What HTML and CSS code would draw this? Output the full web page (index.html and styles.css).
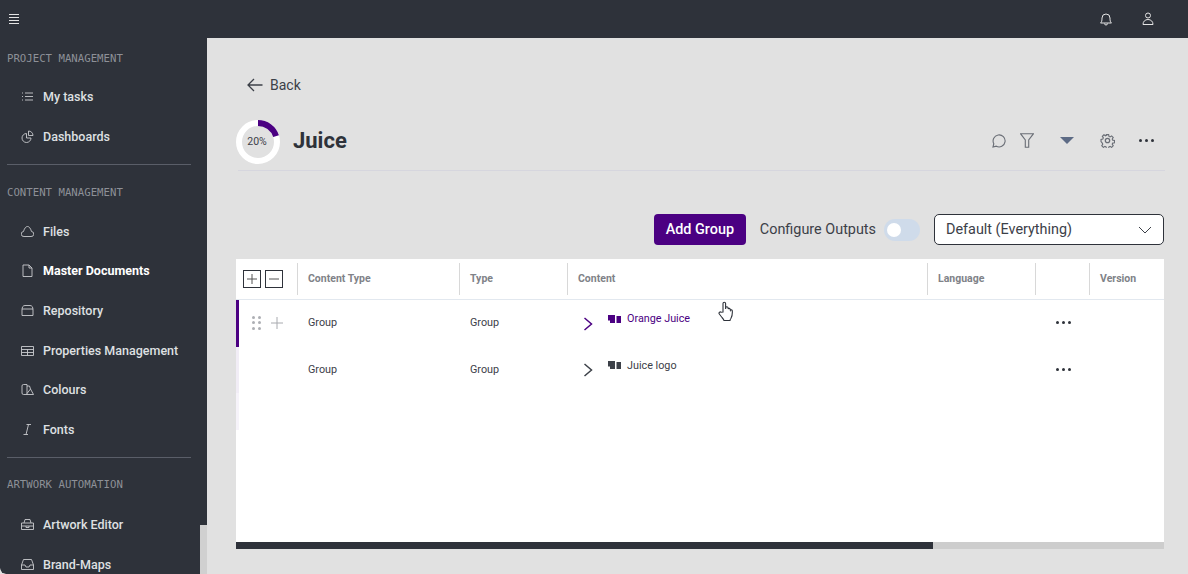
FILE: index.html
```html
<!DOCTYPE html>
<html lang="en">
<head>
    <meta charset="UTF-8">
    <title>Juice</title>
    <link rel="stylesheet" href="styles.css">
</head>
<body>
    <header class="topbar">
        <svg class="menu-icon" width="10" height="10" viewBox="0 0 10 10"><path d="M0 .5h10M0 3.5h10M0 6.5h10M0 9.5h10"/></svg>
        <svg class="top-icon bell" width="14" height="14" viewBox="0 0 14 14"><path d="M1.500 11c1.200-1 1.500-2 1.500-5a4 4 0 0 1 8 0c0 3 .3 4 1.500 5zM5.500 11.500a1.500 1.500 0 0 0 3 0"/></svg>
        <svg class="top-icon" width="14" height="14" viewBox="0 0 14 14"><circle cx="7" cy="3.500" r="2.500"/><path d="M2 12.500c0-3 2-5 5-5s5 2 5 5z"/></svg>
    </header>

    <div class="layout">
        <aside class="sidebar">
            <nav class="nav">
                <div class="nav-title first">PROJECT MANAGEMENT</div>
                <a class="nav-item"><svg width="13" height="13" viewBox="0 0 13 13"><path d="M4 3h8M4 6.500h8M4 10h8M1 3h1M1 6.500h1M1 10h1"/></svg>My tasks</a>
                <a class="nav-item"><svg width="13" height="13" viewBox="0 0 13 13"><path d="M5.500 3.500a4.500 4.500 0 1 0 4.500 4.500H5.500z"/><path d="M7.500 1a4.500 4.500 0 0 1 4.500 4.500H7.500z"/></svg>Dashboards</a>
                <div class="nav-line"></div>
                <div class="nav-title">CONTENT MANAGEMENT</div>
                <a class="nav-item"><svg width="13" height="13" viewBox="0 0 13 13"><path d="M3 11.500a2.500 2.500 0 0 1-.5-5C3.500 3 5 1.500 6.500 1.500s3 1.500 4 5a2.500 2.500 0 0 1-.5 5z"/></svg>Files</a>
                <a class="nav-item active"><svg width="13" height="13" viewBox="0 0 13 13"><path d="M2 1h6l3 3v8.500H2z"/><path d="M8 1v3h3"/></svg>Master Documents</a>
                <a class="nav-item"><svg width="13" height="13" viewBox="0 0 13 13"><path d="M1 6V11.500h11V6c0-3-1-4.500-3-4.500H4C2 1.500 1 3 1 6zM1 5h11"/></svg>Repository</a>
                <a class="nav-item"><svg width="13" height="13" viewBox="0 0 13 13"><path d="M.5 2.500h12v9H.5zM.5 5.500h12M.5 8.500h12M6.500 5.500v6"/></svg>Properties Management</a>
                <a class="nav-item"><svg width="13" height="13" viewBox="0 0 13 13"><path d="M2.500 1.500H6v10H2.500a1.500 1.500 0 0 1-1.500-1.500V3a1.500 1.500 0 0 1 1.500-1.500zM6 3h2.500l1 3L6 10.500M6 11.500h6.500L9.500 6"/></svg>Colours</a>
                <a class="nav-item"><svg width="13" height="13" viewBox="0 0 13 13"><path d="M7.500 1.500L5 11.500M5.500 1.500h4.500M2.500 11.500h4.500"/></svg>Fonts</a>
                <div class="nav-line tight"></div>
                <div class="nav-title third">ARTWORK AUTOMATION</div>
                <a class="nav-item"><svg width="13" height="13" viewBox="0 0 13 13"><path d="M.5 5h12v6.500H.5zM.5 8h12M3 5l1-3.500h5L10 5M5 8v1.500h3V8"/></svg>Artwork Editor</a>
                <a class="nav-item"><svg width="13" height="13" viewBox="0 0 13 13"><path d="M.5 7l2-5.500h8l2 5.500v4.500H.5zM.5 7h3.500l1 2h3l1-2h3.500"/></svg>Brand-Maps</a>
            </nav>
            <div class="side-scroll"><div class="side-thumb"></div></div>
        </aside>

        <main class="main">
            <a class="back">
                <svg width="16" height="14" viewBox="0 0 16 14"><path d="M15.500 7H1M7 1L1 7l6 6"/></svg>
                Back
            </a>

            <div class="title-row">
                <div class="progress">
                    <svg width="44" height="44" viewBox="0 0 44 44">
                        <circle class="ring" cx="22" cy="22" r="19"/>
                        <path class="ring-value" d="M22 3a19 19 0 0 1 18.070 13.130"/>
                    </svg>
                    <span class="progress-label">20%</span>
                </div>
                <h1>Juice</h1>
                <div class="title-actions">
                    <svg class="act comment" width="14" height="14" viewBox="0 0 14 14"><path d="M1 13l.8-3.300A6 6 0 1 1 4.300 12.200z"/></svg>
                    <svg class="act filter" width="14" height="15" viewBox="0 0 14 15"><path d="M.5.700h13L8.700 7v7.300H5.300V7z"/></svg>
                    <span class="caret"></span>
                    <svg class="act gear" width="15" height="15" viewBox="0 0 24 24"><circle cx="12" cy="12" r="3.500"/><path d="M10 1.500h4l.6 3.200 2 .9 2.700-1.800 2.900 2.900-1.800 2.700.9 2 3.200.6v4l-3.200.6-.9 2 1.800 2.700-2.900 2.900-2.700-1.800-2 .9-.6 3.200h-4l-.6-3.200-2-.9-2.700 1.800-2.900-2.900 1.800-2.700-.9-2L.5 14v-4l3.200-.6.900-2-1.800-2.700 2.900-2.900 2.700 1.800 2-.9z" transform="translate(1.200 1.200) scale(.9)"/></svg>
                    <span class="dots"><i></i><i></i><i></i></span>
                </div>
            </div>

            <div class="toolbar">
                <button class="add-btn">Add Group</button>
                <span class="toggle-label">Configure Outputs</span>
                <span class="toggle"><span class="knob"></span></span>
                <div class="select">
                    Default (Everything)
                    <svg width="14" height="8" viewBox="0 0 14 8"><path d="M1 1l6 6 6-6"/></svg>
                </div>
            </div>

            <div class="table">
                <div class="tbl-row tbl-head">
                    <div class="head-tools">
                        <span class="box"><svg width="10" height="10" viewBox="0 0 10 10"><path d="M0 5h10M5 0v10"/></svg></span>
                        <span class="box"><svg width="10" height="10" viewBox="0 0 10 10"><path d="M0 5h10"/></svg></span>
                    </div>
                    <div class="head-cell">Content Type</div>
                    <div class="head-cell">Type</div>
                    <div class="head-cell">Content</div>
                    <div class="head-cell">Language</div>
                    <div class="head-cell"></div>
                    <div class="head-cell">Version</div>
                </div>

                <div class="tbl-row body-row selected">
                    <div class="row-tools">
                        <span class="grip"><i></i><i></i><i></i><i></i><i></i><i></i></span>
                        <svg width="12" height="12" viewBox="0 0 12 12"><path d="M0 6h12M6 0v12"/></svg>
                    </div>
                    <div class="cell">Group</div>
                    <div class="cell">Group</div>
                    <div class="cell content-cell">
                        <svg class="chev" width="10" height="14" viewBox="0 0 10 14"><path d="M1.500 1l7 6-7 6"/></svg>
                        <svg class="stack" width="13" height="9" viewBox="0 0 13 9"><path d="M0 0h7v8H2V5.500H0zM8.500 1H13v7H8.500z"/></svg>
                        <span class="content-name">Orange Juice</span>
                    </div>
                    <div class="cell"></div>
                    <div class="cell dots-cell"><span class="dots"><i></i><i></i><i></i></span></div>
                    <div class="cell"></div>
                </div>

                <div class="tbl-row body-row second">
                    <div class="row-tools"></div>
                    <div class="cell">Group</div>
                    <div class="cell">Group</div>
                    <div class="cell content-cell">
                        <svg class="chev" width="10" height="14" viewBox="0 0 10 14"><path d="M1.500 1l7 6-7 6"/></svg>
                        <svg class="stack" width="13" height="9" viewBox="0 0 13 9"><path d="M0 0h7v8H2V5.500H0zM8.500 1H13v7H8.500z"/></svg>
                        <span class="content-name">Juice logo</span>
                    </div>
                    <div class="cell"></div>
                    <div class="cell dots-cell"><span class="dots"><i></i><i></i><i></i></span></div>
                    <div class="cell"></div>
                </div>

                <div class="tbl-fill"></div>
                <div class="tbl-scroll"><div class="tbl-thumb"></div></div>

                <svg class="hand" width="16" height="21" viewBox="0 0 16 21"><path d="M5 11V2.500a1.300 1.300 0 0 1 2.600 0V8l.2-1.500c.3-1 2-1 2.200.2l.2 1.300c.3-1 1.900-.8 2 .3l.2 1c.4-.8 1.800-.6 1.900.5.200 3-.1 5.500-1.300 7.500-.7 1-1 1.700-1 2.200H6c-.3-1-1-2-2-3L1.300 13c-.9-1.200.6-2.700 1.800-1.800z"/></svg>
            </div>
        </main>
    </div>
</body>
</html>
```

FILE: styles.css
```css
* {
    box-sizing: border-box;
}
html, body {
    height: 100%;
}
body {
    margin: 0;
    overflow: hidden;
    font-family: Roboto, Arial, sans-serif;
    background-color: #e1e1e1;
    color: #2e323a;
}
svg {
    fill: none;
    stroke: currentColor;
    flex-shrink: 0;
}

/* top bar */
.topbar {
    display: flex;
    align-items: center;
    height: 38px;
    padding: 0 33px 0 9px;
    background-color: #2e323a;
    color: #e4e4e4;
}
.menu-icon {
    margin-right: auto;
}
.top-icon.bell {
    margin-right: 28px;
}

/* sidebar */
.layout {
    display: flex;
    height: 536px;
}
.sidebar {
    display: flex;
    width: 207px;
    flex-shrink: 0;
    overflow: hidden;
    border-bottom-left-radius: 6px;
}
.nav {
    width: 200px;
    height: 100%;
    overflow: hidden;
    background-color: #2e323a;
    border-bottom-left-radius: 6px;
}
.side-scroll {
    width: 7px;
    background-color: #d0d0d0;
}
.side-thumb {
    height: 487px;
    background-color: #2e323a;
}
.nav-title {
    height: 14px;
    margin-top: 21px;
    padding-left: 7px;
    font-family: "DejaVu Sans Mono", monospace;
    font-size: 10.7px;
    line-height: 14px;
    white-space: nowrap;
    color: #8d9097;
}
.nav-title.first {
    margin-top: 14px;
}
.nav-title.third {
    margin-top: 20px;
}
.nav-item {
    display: flex;
    align-items: center;
    gap: 9px;
    height: 39.700px;
    padding-left: 21px;
    font-size: 12.500px;
    font-weight: 500;
    color: #dfe0e2;
    white-space: nowrap;
}
.nav-title + .nav-item {
    margin-top: 11px;
}
.nav-title.third + .nav-item {
    margin-top: 13px;
}
.nav-item svg {
    color: #c9cbce;
    stroke-width: .9;
}
.nav-item.active {
    font-weight: 700;
    color: #fff;
}
.nav-line {
    width: 184px;
    height: 1px;
    margin: 8px 0 0 7px;
    background-color: #5a5e68;
}
.nav-line.tight {
    margin-top: 7px;
}

/* main */
.main {
    flex: 1;
    padding: 38px 24px 0 29px;
    min-width: 0;
}
.back {
    display: flex;
    align-items: center;
    gap: 7px;
    height: 18px;
    margin-left: 11px;
    font-size: 14px;
    color: #3c4048;
}
.back svg {
    stroke-width: 1.300;
}
.title-row {
    display: flex;
    align-items: center;
    height: 53px;
    margin: 24px -1px 0 2px;
    padding-bottom: 7px;
    border-bottom: 1px solid #d6d6de;
}
.progress {
    position: relative;
    width: 44px;
    height: 44px;
    margin: 0 0 -2px -2px;
}
.ring {
    stroke: #fff;
    stroke-width: 6;
}
.ring-value {
    stroke: #4b0082;
    stroke-width: 6;
}
.progress-label {
    position: absolute;
    top: 0;
    left: -1px;
    width: 44px;
    line-height: 44px;
    text-align: center;
    font-size: 10.500px;
    color: #3c4048;
}
h1 {
    margin: 0 0 0 13px;
    font-size: 22px;
    font-weight: 700;
    color: #2e323a;
}
.title-actions {
    display: flex;
    align-items: center;
    margin-left: auto;
    padding-right: 11px;
    color: #6a6e76;
}
.act {
    stroke-width: 1.100;
}
.gear {
    stroke-width: 2;
}
.filter {
    margin-left: 14px;
}
.caret {
    width: 0;
    height: 0;
    margin: 0 26px 0 26px;
    border-left: 7px solid transparent;
    border-right: 7px solid transparent;
    border-top: 7px solid #5d6b85;
}
.dots {
    display: inline-flex;
    gap: 3px;
}
.dots i {
    width: 3px;
    height: 3px;
    border-radius: 50%;
    background-color: #2e323a;
}
.title-actions .dots {
    margin-left: 24px;
}

/* toolbar */
.toolbar {
    display: flex;
    align-items: center;
    justify-content: flex-end;
    height: 31px;
    margin-top: 43px;
}
.add-btn {
    width: 92px;
    height: 31px;
    border: none;
    border-radius: 4px;
    background-color: #4b0082;
    color: #fff;
    font-family: inherit;
    font-size: 14.400px;
    font-weight: 500;
}
.toggle-label {
    margin-left: 14px;
    font-size: 14.400px;
    color: #3c4048;
}
.toggle {
    display: flex;
    align-items: center;
    width: 36px;
    height: 22px;
    margin-left: 8px;
    padding-left: 3px;
    border-radius: 11px;
    background-color: #cfdbea;
}
.knob {
    width: 14px;
    height: 14px;
    border-radius: 50%;
    background-color: #fff;
}
.select {
    display: flex;
    align-items: center;
    justify-content: space-between;
    width: 230px;
    height: 31px;
    margin-left: 14px;
    padding: 0 11px;
    border: 1px solid #2e323a;
    border-radius: 5px;
    background-color: #fff;
    font-size: 14.400px;
    color: #3c4048;
}

/* table */
.table {
    position: relative;
    display: flex;
    flex-direction: column;
    height: 290px;
    margin-top: 14px;
    background-color: #fff;
}
.tbl-row {
    display: grid;
    grid-template-columns: 61px 162px 108px 360px 108px 54px 75px;
}
.tbl-head {
    align-items: center;
    height: 41px;
    border-bottom: 1px solid #e2e8ef;
}
.head-tools {
    display: flex;
    gap: 4px;
    padding-left: 7px;
}
.box {
    display: flex;
    align-items: center;
    justify-content: center;
    width: 18px;
    height: 18px;
    border: 1px solid #2e323a;
    color: #555;
}
.head-cell {
    height: 32px;
    padding-left: 10px;
    border-left: 1px solid #d8d8d8;
    font-size: 10.500px;
    font-weight: 700;
    line-height: 32px;
    color: #808288;
}
.body-row {
    height: 46.500px;
    padding-bottom: 1px;
}
.selected {
    box-shadow: inset 3px 0 0 #4b0082;
}
.second {
    box-shadow: inset 3px 0 0 #f1edf6;
}
.row-tools {
    display: flex;
    align-items: center;
    gap: 10px;
    padding-left: 16px;
    color: #a8aaaf;
}
.grip {
    display: grid;
    grid-template-columns: 3px 3px;
    gap: 2.500px;
}
.grip i {
    width: 3px;
    height: 3px;
    border-radius: 50%;
    background-color: #adafb4;
}
.cell {
    display: flex;
    align-items: center;
    padding-left: 11px;
    font-size: 10.800px;
    color: #3c4048;
}
.content-cell {
    padding-left: 16px;
}
.chev {
    stroke-width: 1.500;
    margin-top: 2px;
}
.stack {
    fill: currentColor;
    stroke: none;
    margin: 0 0 7px 15px;
}
.content-name {
    margin: 0 0 8px 6px;
    line-height: 13px;
}
.selected .content-cell {
    color: #4b0082;
}
.dots-cell {
    padding-left: 21px;
}
.tbl-fill {
    flex: 1;
    background: linear-gradient(#f6f3fa, #f6f3fa) no-repeat 0 0 / 3px 37px;
}
.tbl-scroll {
    height: 7px;
    background-color: #cdcdcd;
}
.tbl-thumb {
    width: 697px;
    height: 7px;
    background-color: #2e323a;
}
.hand {
    position: absolute;
    left: 482px;
    top: 42px;
    fill: #fff;
    stroke: #2e323a;
    stroke-width: 1.100;
}
```
